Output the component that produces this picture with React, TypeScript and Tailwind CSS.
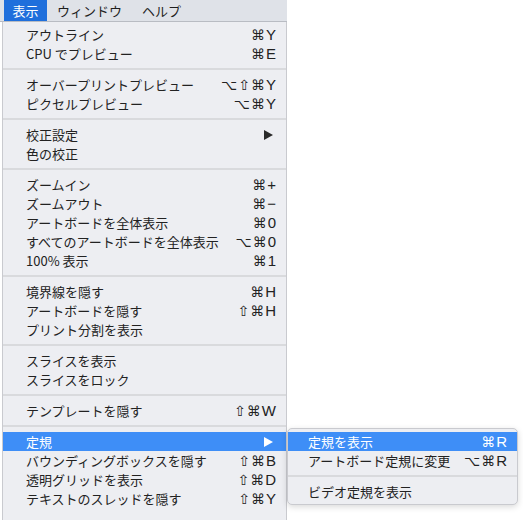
type Item = {
  label: string;
  shortcut?: string;
  submenu?: boolean;
  active?: boolean;
};

type Section = Item[];

const sections: Section[] = [
  [
    { label: "アウトライン", shortcut: "⌘Y" },
    { label: "CPU でプレビュー", shortcut: "⌘E" },
  ],
  [
    { label: "オーバープリントプレビュー", shortcut: "⌥⇧⌘Y" },
    { label: "ピクセルプレビュー", shortcut: "⌥⌘Y" },
  ],
  [
    { label: "校正設定", submenu: true },
    { label: "色の校正" },
  ],
  [
    { label: "ズームイン", shortcut: "⌘+" },
    { label: "ズームアウト", shortcut: "⌘−" },
    { label: "アートボードを全体表示", shortcut: "⌘0" },
    { label: "すべてのアートボードを全体表示", shortcut: "⌥⌘0" },
    { label: "100% 表示", shortcut: "⌘1" },
  ],
  [
    { label: "境界線を隠す", shortcut: "⌘H" },
    { label: "アートボードを隠す", shortcut: "⇧⌘H" },
    { label: "プリント分割を表示" },
  ],
  [
    { label: "スライスを表示" },
    { label: "スライスをロック" },
  ],
  [{ label: "テンプレートを隠す", shortcut: "⇧⌘W" }],
  [
    { label: "定規", submenu: true, active: true },
    { label: "バウンディングボックスを隠す", shortcut: "⇧⌘B" },
    { label: "透明グリッドを表示", shortcut: "⇧⌘D" },
    { label: "テキストのスレッドを隠す", shortcut: "⇧⌘Y" },
  ],
];

const rulerMenu: Section[] = [
  [
    { label: "定規を表示", shortcut: "⌘R", active: true },
    { label: "アートボード定規に変更", shortcut: "⌥⌘R" },
  ],
  [{ label: "ビデオ定規を表示" }],
];

function Shortcut({ keys }: { keys: string }) {
  return (
    <span className="flex items-center gap-[1px] font-['DejaVu_Sans','Noto_Sans_CJK_JP',sans-serif] text-[14px]">
      {keys.split("").map((k, i) => (
        <span key={i} className={/[A-Z0-9+−]/.test(k) ? "font-['Liberation_Sans',sans-serif] text-[15px]" : ""}>
          {k}
        </span>
      ))}
    </span>
  );
}

function Row({ item, padLeft }: { item: Item; padLeft: string }) {
  return (
    <div
      className={`flex h-[19px] items-center justify-between pr-[10px] ${padLeft} ${
        item.active ? "bg-[#3e8ef7] text-white" : "text-[#222222]"
      }`}
    >
      <span>{item.label}</span>
      {item.shortcut && <Shortcut keys={item.shortcut} />}
      {item.submenu && (
        <svg width="9" height="10" viewBox="0 0 9 10" className="mr-[3px]">
          <path d="M0 0 L9 5 L0 10 Z" fill={item.active ? "#ffffff" : "#2a2a2a"} />
        </svg>
      )}
    </div>
  );
}

function Separator() {
  return (
    <div className="flex h-[12px] items-center">
      <div className="h-[2px] w-full bg-[#d9dadd]" />
    </div>
  );
}

export default function App() {
  return (
    <div className="relative h-[520px] w-[523px] overflow-hidden bg-white font-['Noto_Sans_CJK_JP',sans-serif] text-[13px] leading-none">
      <div className="flex h-[22px] w-[287px] items-stretch border-b border-[#b9bcc3] bg-[#dfe2e8] text-[#1e1e1e]">
        <div className="ml-[4px] flex w-[43px] items-center justify-center bg-[#1f6fdc] text-white">表示</div>
        <div className="flex items-center pl-[10px] pr-[10px]">ウィンドウ</div>
        <div className="flex items-center px-[10px]">ヘルプ</div>
      </div>

      <div className="ml-[2px] w-[285px] border-x border-[#c9cacf] bg-[#edeef2] pt-[3px]">
        {sections.map((section, si) => (
          <div key={si}>
            {si > 0 && <Separator />}
            {section.map((item) => (
              <Row key={item.label} item={item} padLeft="pl-[23px]" />
            ))}
          </div>
        ))}
        <div className="h-[12px]" />
      </div>

      <div className="absolute left-[287px] top-[428px] w-[231px] rounded-[5px] border border-[#c9cacf] bg-[#edeef2] py-[3px] shadow-[0_2px_6px_rgba(0,0,0,0.15)]">
        {rulerMenu.map((section, si) => (
          <div key={si}>
            {si > 0 && <Separator />}
            {section.map((item) => (
              <Row key={item.label} item={item} padLeft="pl-[20px]" />
            ))}
          </div>
        ))}
      </div>
    </div>
  );
}
